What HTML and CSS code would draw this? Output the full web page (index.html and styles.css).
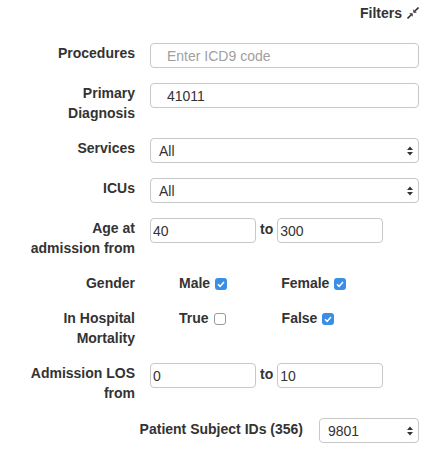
FILE: index.html
```html
<!DOCTYPE html>
<html>
<head>
<meta charset="utf-8">
<link rel="stylesheet" href="styles.css">
</head>
<body>
<div class="panel">
  <div class="panel-head">
    <span class="title">Filters</span>
    <svg class="compress" width="12" height="12" viewBox="0 0 12 12">
      <line x1="11.5" y1="0.5" x2="8" y2="4" stroke="#333" stroke-width="1.6"/>
      <polygon points="6.3,5.7 6.3,2.2 9.8,5.7" fill="#333"/>
      <line x1="0.5" y1="11.5" x2="4" y2="8" stroke="#333" stroke-width="1.6"/>
      <polygon points="5.7,6.3 5.7,9.8 2.2,6.3" fill="#333"/>
    </svg>
  </div>
  <form class="form">
    <label class="lbl">Procedures</label>
    <input class="ctl wide" type="text" placeholder="Enter ICD9 code">

    <label class="lbl">Primary Diagnosis</label>
    <input class="ctl wide" type="text" value="41011">

    <label class="lbl">Services</label>
    <div class="ctl select"><span>All</span><svg width="6" height="10" viewBox="0 0 6 10"><polygon points="0,4 3,0.5 6,4" fill="#333"/><polygon points="0,6 3,9.5 6,6" fill="#333"/></svg></div>

    <label class="lbl">ICUs</label>
    <div class="ctl select"><span>All</span><svg width="6" height="10" viewBox="0 0 6 10"><polygon points="0,4 3,0.5 6,4" fill="#333"/><polygon points="0,6 3,9.5 6,6" fill="#333"/></svg></div>

    <label class="lbl">Age at admission from</label>
    <div class="range">
      <input class="ctl small" type="text" value="40">
      <span class="to">to</span>
      <input class="ctl small" type="text" value="300">
    </div>

    <label class="lbl">Gender</label>
    <div class="checks">
      <span class="opt">Male <svg class="cb" width="12" height="12" viewBox="0 0 12 12"><rect x="0" y="0" width="12" height="12" rx="3" fill="#3a8ee6"/><path d="M3 6.3 L5.1 8.4 L9 3.9" fill="none" stroke="#fff" stroke-width="1.5"/></svg></span>
      <span class="opt opt2">Female <svg class="cb" width="12" height="12" viewBox="0 0 12 12"><rect x="0" y="0" width="12" height="12" rx="3" fill="#3a8ee6"/><path d="M3 6.3 L5.1 8.4 L9 3.9" fill="none" stroke="#fff" stroke-width="1.5"/></svg></span>
    </div>

    <label class="lbl">In Hospital Mortality</label>
    <div class="checks">
      <span class="opt">True <svg class="cb" width="12" height="12" viewBox="0 0 12 12"><rect x="0.5" y="0.5" width="11" height="11" rx="2.5" fill="#fff" stroke="#999"/></svg></span>
      <span class="opt opt3">False <svg class="cb" width="12" height="12" viewBox="0 0 12 12"><rect x="0" y="0" width="12" height="12" rx="3" fill="#3a8ee6"/><path d="M3 6.3 L5.1 8.4 L9 3.9" fill="none" stroke="#fff" stroke-width="1.5"/></svg></span>
    </div>

    <label class="lbl">Admission LOS from</label>
    <div class="range">
      <input class="ctl small" type="text" value="0">
      <span class="to">to</span>
      <input class="ctl small" type="text" value="10">
    </div>

    <div class="patients">
      <label class="plbl">Patient Subject IDs (356)</label>
      <div class="ctl select psel"><span>9801</span><svg width="6" height="10" viewBox="0 0 6 10"><polygon points="0,4 3,0.5 6,4" fill="#333"/><polygon points="0,6 3,9.5 6,6" fill="#333"/></svg></div>
    </div>
  </form>
</div>
</body>
</html>
```
FILE: styles.css
```css
html, body {
  margin: 0;
  padding: 0;
  background: #fff;
}
body {
  font-family: "Liberation Sans", Arial, sans-serif;
  font-size: 14px;
  color: #333;
}
.panel {
  padding: 3px 16px 0 25px;
}
.panel-head {
  display: flex;
  justify-content: flex-end;
  align-items: center;
  gap: 5px;
  height: 20px;
  line-height: 20px;
  margin-bottom: 20px;
}
.title {
  font-weight: bold;
}
.compress {
  display: block;
  margin-top: -1px;
}
.form {
  display: grid;
  grid-template-columns: 110px 1fr;
  column-gap: 15px;
  row-gap: 15px;
  align-items: start;
}
.lbl {
  font-weight: bold;
  text-align: right;
  line-height: 20px;
}
.ctl {
  box-sizing: border-box;
  height: 25px;
  border: 1px solid #c8c8c8;
  border-radius: 4px;
  background: #fff;
  font-family: "Liberation Sans", Arial, sans-serif;
  font-size: 14px;
  color: #333;
  margin: 0;
  outline: none;
}
.wide {
  width: 100%;
  padding: 0 16px;
}
.wide::placeholder {
  color: #a0a0a0;
}
.select {
  display: flex;
  align-items: center;
  justify-content: space-between;
  padding: 0 5px 0 8px;
}
.select svg {
  display: block;
}
.range {
  display: flex;
  align-items: center;
  gap: 4px;
}
.small {
  width: 106px;
  padding: 0 2px;
}
.to {
  font-weight: bold;
  line-height: 20px;
  margin-top: -3px;
}
.checks {
  display: flex;
  line-height: 20px;
  padding-left: 29px;
}
.opt {
  display: flex;
  align-items: center;
  gap: 5px;
  font-weight: bold;
}
.opt2 {
  margin-left: 54px;
}
.opt3 {
  margin-left: 56px;
}
.cb {
  display: block;
  margin-top: 1px;
}
.patients {
  grid-column: 1 / 3;
  display: flex;
  justify-content: flex-end;
  align-items: center;
  gap: 16px;
}
.plbl {
  font-weight: bold;
  line-height: 20px;
  margin-top: -4px;
}
.psel {
  width: 100px;
}
```
